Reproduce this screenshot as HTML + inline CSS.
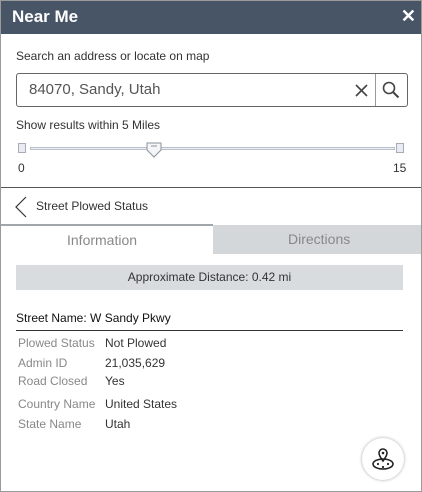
<!DOCTYPE html>
<html><head><style>
*{margin:0;padding:0;box-sizing:border-box}
body{width:422px;height:492px;overflow:hidden;font-family:"Liberation Sans",sans-serif;background:#fff;position:relative}
.frame{position:absolute;left:0;top:0;width:422px;height:492px;border:1px solid #9a9a9a}
.hdr{position:absolute;left:1px;top:1px;width:420px;height:33px;background:#485566;color:#fff}
.hdr .t{position:absolute;left:11px;top:6px;font-size:17px;font-weight:bold}
.hdr .x{position:absolute;right:5px;top:5px;font-size:18px;font-weight:bold}
.abs{position:absolute;white-space:nowrap}
.lbl{font-size:12px;color:#333}
.inp{position:absolute;left:16px;top:73px;width:392px;height:34px;border:1px solid #666;border-radius:3px}
.div{position:absolute;left:358px;top:0;width:1px;height:32px;background:#999}
.tab2{position:absolute;left:213px;top:225px;width:208px;height:29px;background:#d4d7da}
.tabline{position:absolute;left:1px;top:224px;width:212px;height:2px;background:#a0a6ab}
.dist{position:absolute;left:16px;top:265px;width:387px;height:25px;background:#d9dcdf;font-size:12px;color:#333;text-align:center;line-height:25px}
.g{font-size:12px;color:#888}
.v{font-size:12px;color:#333}
</style></head><body>
<div class="frame"></div>
<div class="hdr"><span class="t">Near Me</span><span class="x">✕</span></div>
<div class="abs lbl" style="left:16px;top:49px">Search an address or locate on map</div>
<div class="inp">
 <div class="abs" style="left:12px;top:7px;font-size:15px;color:#555">84070, Sandy, Utah</div>
 <svg class="abs" style="left:338px;top:10px" width="13" height="13"><path d="M1 1L12 12M12 1L1 12" stroke="#444" stroke-width="1.6"/></svg>
 <div class="div"></div>
 <svg class="abs" style="left:365px;top:7px" width="18" height="18"><circle cx="7" cy="7" r="5.5" fill="none" stroke="#444" stroke-width="1.6"/><path d="M11 11L16.5 16.5" stroke="#444" stroke-width="2"/></svg>
</div>
<div class="abs lbl" style="left:16px;top:118px">Show results within 5 Miles</div>
<div class="abs" style="left:18px;top:143px;width:8px;height:10px;border:1px solid #aab;background:#e8ecf2"></div>
<div class="abs" style="left:396px;top:143px;width:8px;height:10px;border:1px solid #aab;background:#e8ecf2"></div>
<div class="abs" style="left:30px;top:147px;width:365px;height:3px;border:1px solid #b8c0cc;background:#eef0f4"></div>
<svg class="abs" style="left:146px;top:142px" width="17" height="16"><path d="M1 1H15V8L8 15L1 8Z" fill="#f4f5f7" stroke="#8a93a0"/><path d="M5 4H11" stroke="#8a93a0"/></svg>
<div class="abs lbl" style="left:18px;top:161px">0</div>
<div class="abs lbl" style="left:393px;top:161px">15</div>
<div class="abs" style="left:1px;top:187px;width:420px;height:1px;background:#555"></div>
<svg class="abs" style="left:14px;top:196px" width="14" height="22"><path d="M12 1L2 11L12 21" fill="none" stroke="#333" stroke-width="1.2"/></svg>
<div class="abs lbl" style="left:36px;top:199px">Street Plowed Status</div>
<div class="tabline"></div>
<div class="tab2"></div>
<div class="abs" style="left:67px;top:232px;font-size:14px;color:#888">Information</div>
<div class="abs" style="left:288px;top:231px;font-size:14px;color:#888">Directions</div>
<div class="dist">Approximate Distance: 0.42 mi</div>
<div class="abs" style="left:16px;top:311px;font-size:12px;color:#111">Street Name: W Sandy Pkwy</div>
<div class="abs" style="left:16px;top:330px;width:387px;height:1px;background:#333"></div>
<div class="abs g" style="left:18px;top:336px">Plowed Status</div><div class="abs v" style="left:105px;top:336px">Not Plowed</div>
<div class="abs g" style="left:18px;top:356px">Admin ID</div><div class="abs v" style="left:105px;top:356px">21,035,629</div>
<div class="abs g" style="left:18px;top:374px">Road Closed</div><div class="abs v" style="left:105px;top:374px">Yes</div>
<div class="abs g" style="left:18px;top:397px">Country Name</div><div class="abs v" style="left:105px;top:397px">United States</div>
<div class="abs g" style="left:18px;top:417px">State Name</div><div class="abs v" style="left:105px;top:417px">Utah</div>
<div class="abs" style="left:362px;top:438px;width:42px;height:42px;border-radius:50%;background:#fff;box-shadow:0 0 3px rgba(0,0,0,.35)"></div>
<svg class="abs" style="left:370px;top:446px" width="26" height="26"><path d="M13 15C10 11 9 9 9 7A4 4 0 0 1 17 7C17 9 16 11 13 15Z" fill="none" stroke="#222" stroke-width="1.6"/><circle cx="13" cy="7" r="1.3" fill="#222"/><ellipse cx="13" cy="18" rx="10" ry="5" fill="none" stroke="#222" stroke-width="1.6"/><circle cx="8" cy="18" r="1.1" fill="#222"/><circle cx="18" cy="18" r="1.1" fill="#222"/><circle cx="13" cy="21" r="1.1" fill="#222"/></svg>
</body></html>
